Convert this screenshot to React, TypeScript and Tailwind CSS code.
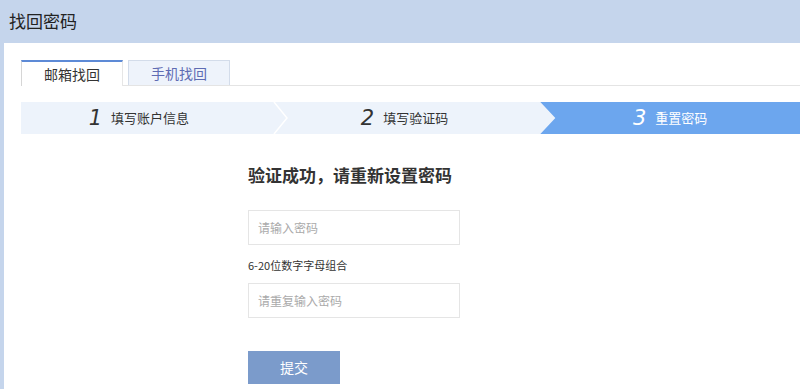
import React from "react";

const font = { fontFamily: '"Noto Sans CJK SC", "Liberation Sans", sans-serif' };
const num = { fontFamily: '"DejaVu Sans", sans-serif', fontWeight: 200 };

export default function App() {
  return (
    <div className="w-[800px] h-[389px] bg-[#c5d5ec] flex flex-col overflow-hidden" style={font}>
      <div className="h-[43px] flex items-center pl-[9px] shrink-0">
        <span className="text-[17px] text-[#222] leading-none -mt-[2px]">找回密码</span>
      </div>
      <div className="flex-1 ml-[4px] bg-white pl-[17px] pt-[17px] flex flex-col">
        {/* tabs */}
        <div className="flex items-end h-[26px] border-b border-[#e4e4e4]">
          <div className="w-[102px] h-[26px] -mb-px bg-white border-t-2 border-t-[#5d8ad6] border-l border-l-[#d6d6d6] border-r border-r-[#e6e6e6] flex items-center justify-center text-[14px] text-[#333]">
            邮箱找回
          </div>
          <div className="ml-[5px] w-[102px] h-[25px] bg-[#eef3fb] border border-[#d3dcea] border-b-0 flex items-center justify-center text-[14px] text-[#5e6bb3]">
            手机找回
          </div>
        </div>
        {/* steps */}
        <div className="mt-[16px] h-[32px] grid grid-cols-3 bg-[#edf3fb]">
          <div className="flex items-center justify-center gap-[9px] pr-[24px] text-[#333] relative">
            <span className="text-[21px] italic leading-none" style={num}>1</span>
            <span className="text-[13px]">填写账户信息</span>
            <svg className="absolute right-[-8px] top-0" width="16" height="32" viewBox="0 0 16 32">
              <polyline points="1,0 14,16 1,32" fill="none" stroke="#ffffff" strokeWidth="1.5" />
            </svg>
          </div>
          <div className="flex items-center justify-center gap-[9px] pr-[12px] text-[#333]">
            <span className="text-[21px] italic leading-none" style={num}>2</span>
            <span className="text-[13px]">填写验证码</span>
          </div>
          <div className="flex items-center justify-center gap-[9px] text-white bg-[#6ca6ee] [clip-path:polygon(0_0,100%_0,100%_100%,0_100%,15px_50%)]">
            <span className="text-[21px] italic leading-none" style={num}>3</span>
            <span className="text-[13px]">重置密码</span>
          </div>
        </div>
        {/* form */}
        <div className="pl-[227px] pt-[32px] flex flex-col">
          <div className="text-[17px] font-bold text-[#333] leading-none h-[18px]">验证成功，请重新设置密码</div>
          <input
            className="mt-[26px] w-[212px] h-[35px] border border-[#e5e5e5] px-[9px] text-[12px] outline-none placeholder:text-[#aaa]"
            placeholder="请输入密码"
            style={font}
          />
          <div className="mt-[15px] text-[11px] text-[#333] leading-none">6-20位数字字母组合</div>
          <input
            className="mt-[12px] w-[212px] h-[35px] border border-[#e5e5e5] px-[9px] text-[12px] outline-none placeholder:text-[#aaa]"
            placeholder="请重复输入密码"
            style={font}
          />
          <button className="mt-[33px] w-[92px] h-[33px] bg-[#7b9bcb] text-white text-[14px]" style={font}>
            提交
          </button>
        </div>
      </div>
    </div>
  );
}
